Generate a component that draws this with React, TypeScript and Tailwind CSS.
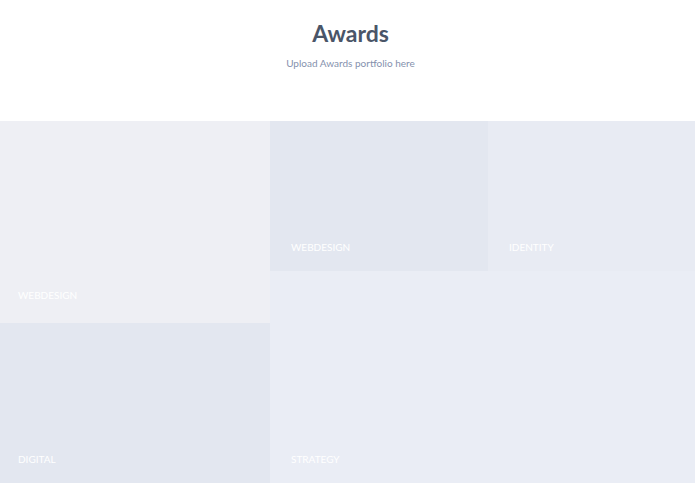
const tiles = [
  { label: "WEBDESIGN", cls: "col-start-1 row-start-1 row-span-2 bg-[#eeeff4] pl-[18px] pb-[21px]" },
  { label: "WEBDESIGN", cls: "col-start-2 row-start-1 bg-[#e3e7f0] pl-[21px] pb-[17px]" },
  { label: "IDENTITY", cls: "col-start-3 row-start-1 bg-[#e8ebf3] pl-[21px] pb-[17px]" },
  { label: "DIGITAL", cls: "col-start-1 row-start-3 bg-[#e3e7f0] pl-[18px] pb-[17px]" },
  { label: "STRATEGY", cls: "col-start-2 col-span-2 row-start-2 row-span-2 bg-[#eaedf5] pl-[21px] pb-[17px]" },
];

export default function App() {
  return (
    <div className="w-[695px] h-[494px] bg-white font-['Lato','Open_Sans',sans-serif] overflow-hidden">
      <div className="flex flex-col items-center pt-[19px] pl-[6px] h-[121px]">
        <h1 className="text-[23px] leading-[28px] font-bold text-[#4a5568]">Awards</h1>
        <p className="mt-[9px] text-[10px] leading-[14px] text-[#8591ad]">Upload Awards portfolio here</p>
      </div>
      <div className="grid grid-cols-[270px_218px_1fr] grid-rows-[150px_52px_160px]">
        {tiles.map((t, i) => (
          <div key={i} className={`flex items-end ${t.cls}`}>
            <span className="text-[10px] leading-[13px] text-white">{t.label}</span>
          </div>
        ))}
      </div>
    </div>
  );
}
